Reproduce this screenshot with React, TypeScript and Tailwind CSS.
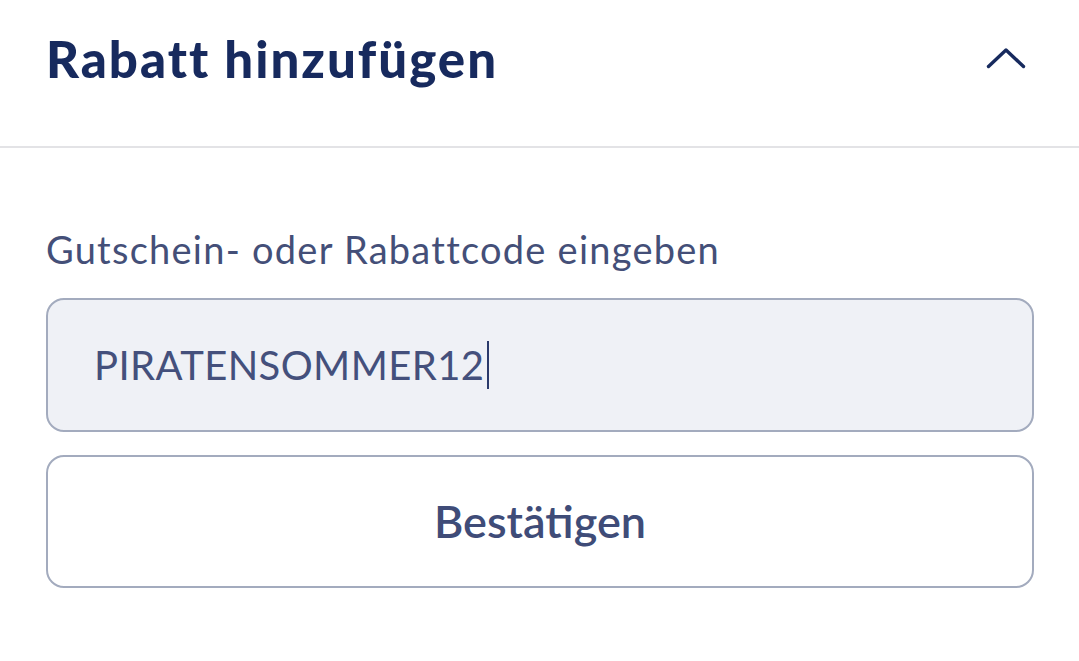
export default function App() {
  return (
    <div className="h-[661px] w-full bg-white font-['Lato',sans-serif]">
      {/* Header */}
      <div className="flex h-[148px] items-center justify-between border-b-2 border-[#e3e3e6] pl-[46px] pr-[53px] pb-[30px]">
        <h2 className="text-[51px] font-black leading-none tracking-[2px] text-[#172a5e]">
          Rabatt hinzufügen
        </h2>
        <svg width="40" height="22" viewBox="0 0 40 22" fill="none">
          <path
            d="M2.5 19.5 L20 3 L37.5 19.5"
            stroke="#172a5e"
            strokeWidth="3.4"
            strokeLinecap="round"
            strokeLinejoin="round"
          />
        </svg>
      </div>

      {/* Body */}
      <div className="flex flex-col pl-[46px] pr-[45px] pt-[82px]">
        <label className="text-[38px] leading-none tracking-[1.25px] text-[#444f78]">
          Gutschein- oder Rabattcode eingeben
        </label>

        <div className="mt-[30px] flex h-[134px] items-center rounded-[18px] border-2 border-[#a3abbe] bg-[#eff1f6] pl-[46px]">
          <span className="text-[40px] leading-none tracking-[0.4px] text-[#44507c]">PIRATENSOMMER12</span>
          <span className="ml-[3px] h-[48px] w-[2px] bg-[#2b3a6b]" />
        </div>

        <button className="mt-[23px] flex h-[133px] items-center justify-center rounded-[18px] border-2 border-[#a3abbe] bg-white text-[45px] font-semibold leading-none text-[#3f4c78]">
          Bestätigen
        </button>
      </div>
    </div>
  );
}
